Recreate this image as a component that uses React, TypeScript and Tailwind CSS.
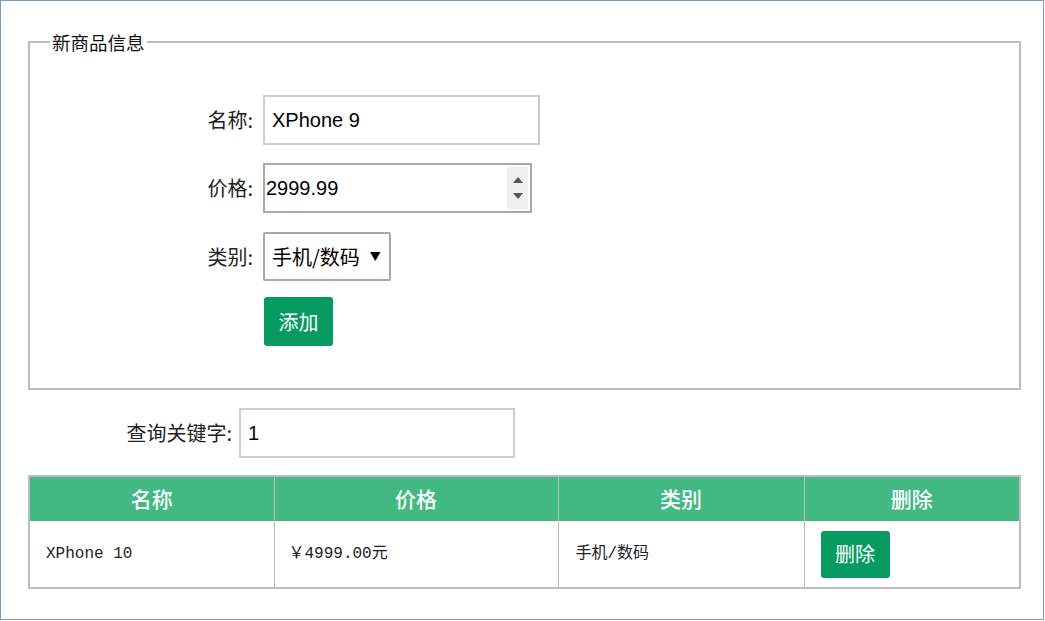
import React from "react";

const cjk = "font-['Noto_Sans_CJK_SC','Liberation_Sans',sans-serif]";

export default function App() {
  return (
    <div className={`w-[1045px] h-[621px] bg-white ${cjk} text-[#222]`}>
      <div className="w-[1044px] h-[620px] border border-[#7f9db9] pt-[29px]">
        {/* 新商品信息 */}
        <fieldset className="ml-[27px] w-[993px] h-[360px] border-2 border-[#bdbdbd]">
          <legend className="ml-[20px] px-[2px] text-[18.5px] leading-[24px] text-[#111]">新商品信息</legend>
          <div className="flex flex-col pt-[41px]">
            <div className="flex items-center">
              <label className="w-[223px] text-right text-[20px] leading-[28px]">名称:</label>
              <input
                defaultValue="XPhone 9"
                className="ml-[10px] w-[277px] h-[50px] border-2 border-[#cccccc] px-[7px] text-[20px] font-['Liberation_Sans',sans-serif] text-black outline-none"
              />
            </div>
            <div className="flex items-center mt-[18px]">
              <label className="w-[223px] text-right text-[20px] leading-[28px]">价格:</label>
              <div className="ml-[10px] w-[269px] h-[50px] border-2 border-[#a9a9a9] flex items-center">
                <span className="flex-1 pl-[1px] text-[20px] font-['Liberation_Sans',sans-serif] text-black">2999.99</span>
                <div className="w-[21px] h-[42px] mr-[2px] bg-[#f0f0f0] flex flex-col items-center justify-center gap-[10px]">
                  <svg width="10" height="6" viewBox="0 0 10 6"><path d="M5 0 L10 6 L0 6 Z" fill="#555" /></svg>
                  <svg width="10" height="6" viewBox="0 0 10 6"><path d="M0 0 L10 0 L5 6 Z" fill="#555" /></svg>
                </div>
              </div>
            </div>
            <div className="flex items-center mt-[19px]">
              <label className="w-[223px] text-right text-[20px] leading-[28px]">类别:</label>
              <div className="ml-[10px] w-[128px] h-[49px] border-2 border-[#a9a9a9] rounded-[2px] flex items-center pl-[7px] text-[20px] text-black">
                <span>手机/数码</span>
                <span className="ml-[10px] text-[11px]">▼</span>
              </div>
            </div>
            <div className="flex items-center mt-[16px]">
              <div className="w-[223px]" />
              <button className="ml-[11px] w-[69px] h-[49px] bg-[#079b62] rounded-[3px] text-white text-[20px]">添加</button>
            </div>
          </div>
        </fieldset>

        {/* 查询 */}
        <div className="flex items-center mt-[18px]">
          <label className="w-[231px] text-right text-[20px] leading-[28px]">查询关键字:</label>
          <input
            defaultValue="1"
            className="ml-[7px] w-[276px] h-[50px] border-2 border-[#cccccc] px-[7px] text-[20px] font-['Liberation_Sans',sans-serif] text-black outline-none"
          />
        </div>

        {/* 列表 */}
        <table className="ml-[27px] mt-[17px] w-[993px] border-collapse border-2 border-[#bdbdbd]">
          <thead>
            <tr className="bg-[#42b983] text-white text-[21px] h-[45px]">
              <th className="w-[245px] font-medium border-r border-[#bdbdbd]">名称</th>
              <th className="w-[284px] font-medium border-r border-[#bdbdbd]">价格</th>
              <th className="w-[246px] font-medium border-r border-[#bdbdbd]">类别</th>
              <th className="font-medium">删除</th>
            </tr>
          </thead>
          <tbody>
            <tr className="h-[67px] text-[16px] font-['Liberation_Mono','Noto_Sans_CJK_SC',monospace] text-[#222]">
              <td className="pl-[16px] border-r border-[#bdbdbd]">XPhone 10</td>
              <td className="pl-[14px] border-r border-[#bdbdbd]">￥4999.00元</td>
              <td className="pl-[17px] border-r border-[#bdbdbd]">手机/数码</td>
              <td className="pl-[16px]">
                <button className={`w-[69px] h-[47px] bg-[#079b62] rounded-[3px] text-white text-[20px] ${cjk}`}>删除</button>
              </td>
            </tr>
          </tbody>
        </table>
      </div>
    </div>
  );
}
